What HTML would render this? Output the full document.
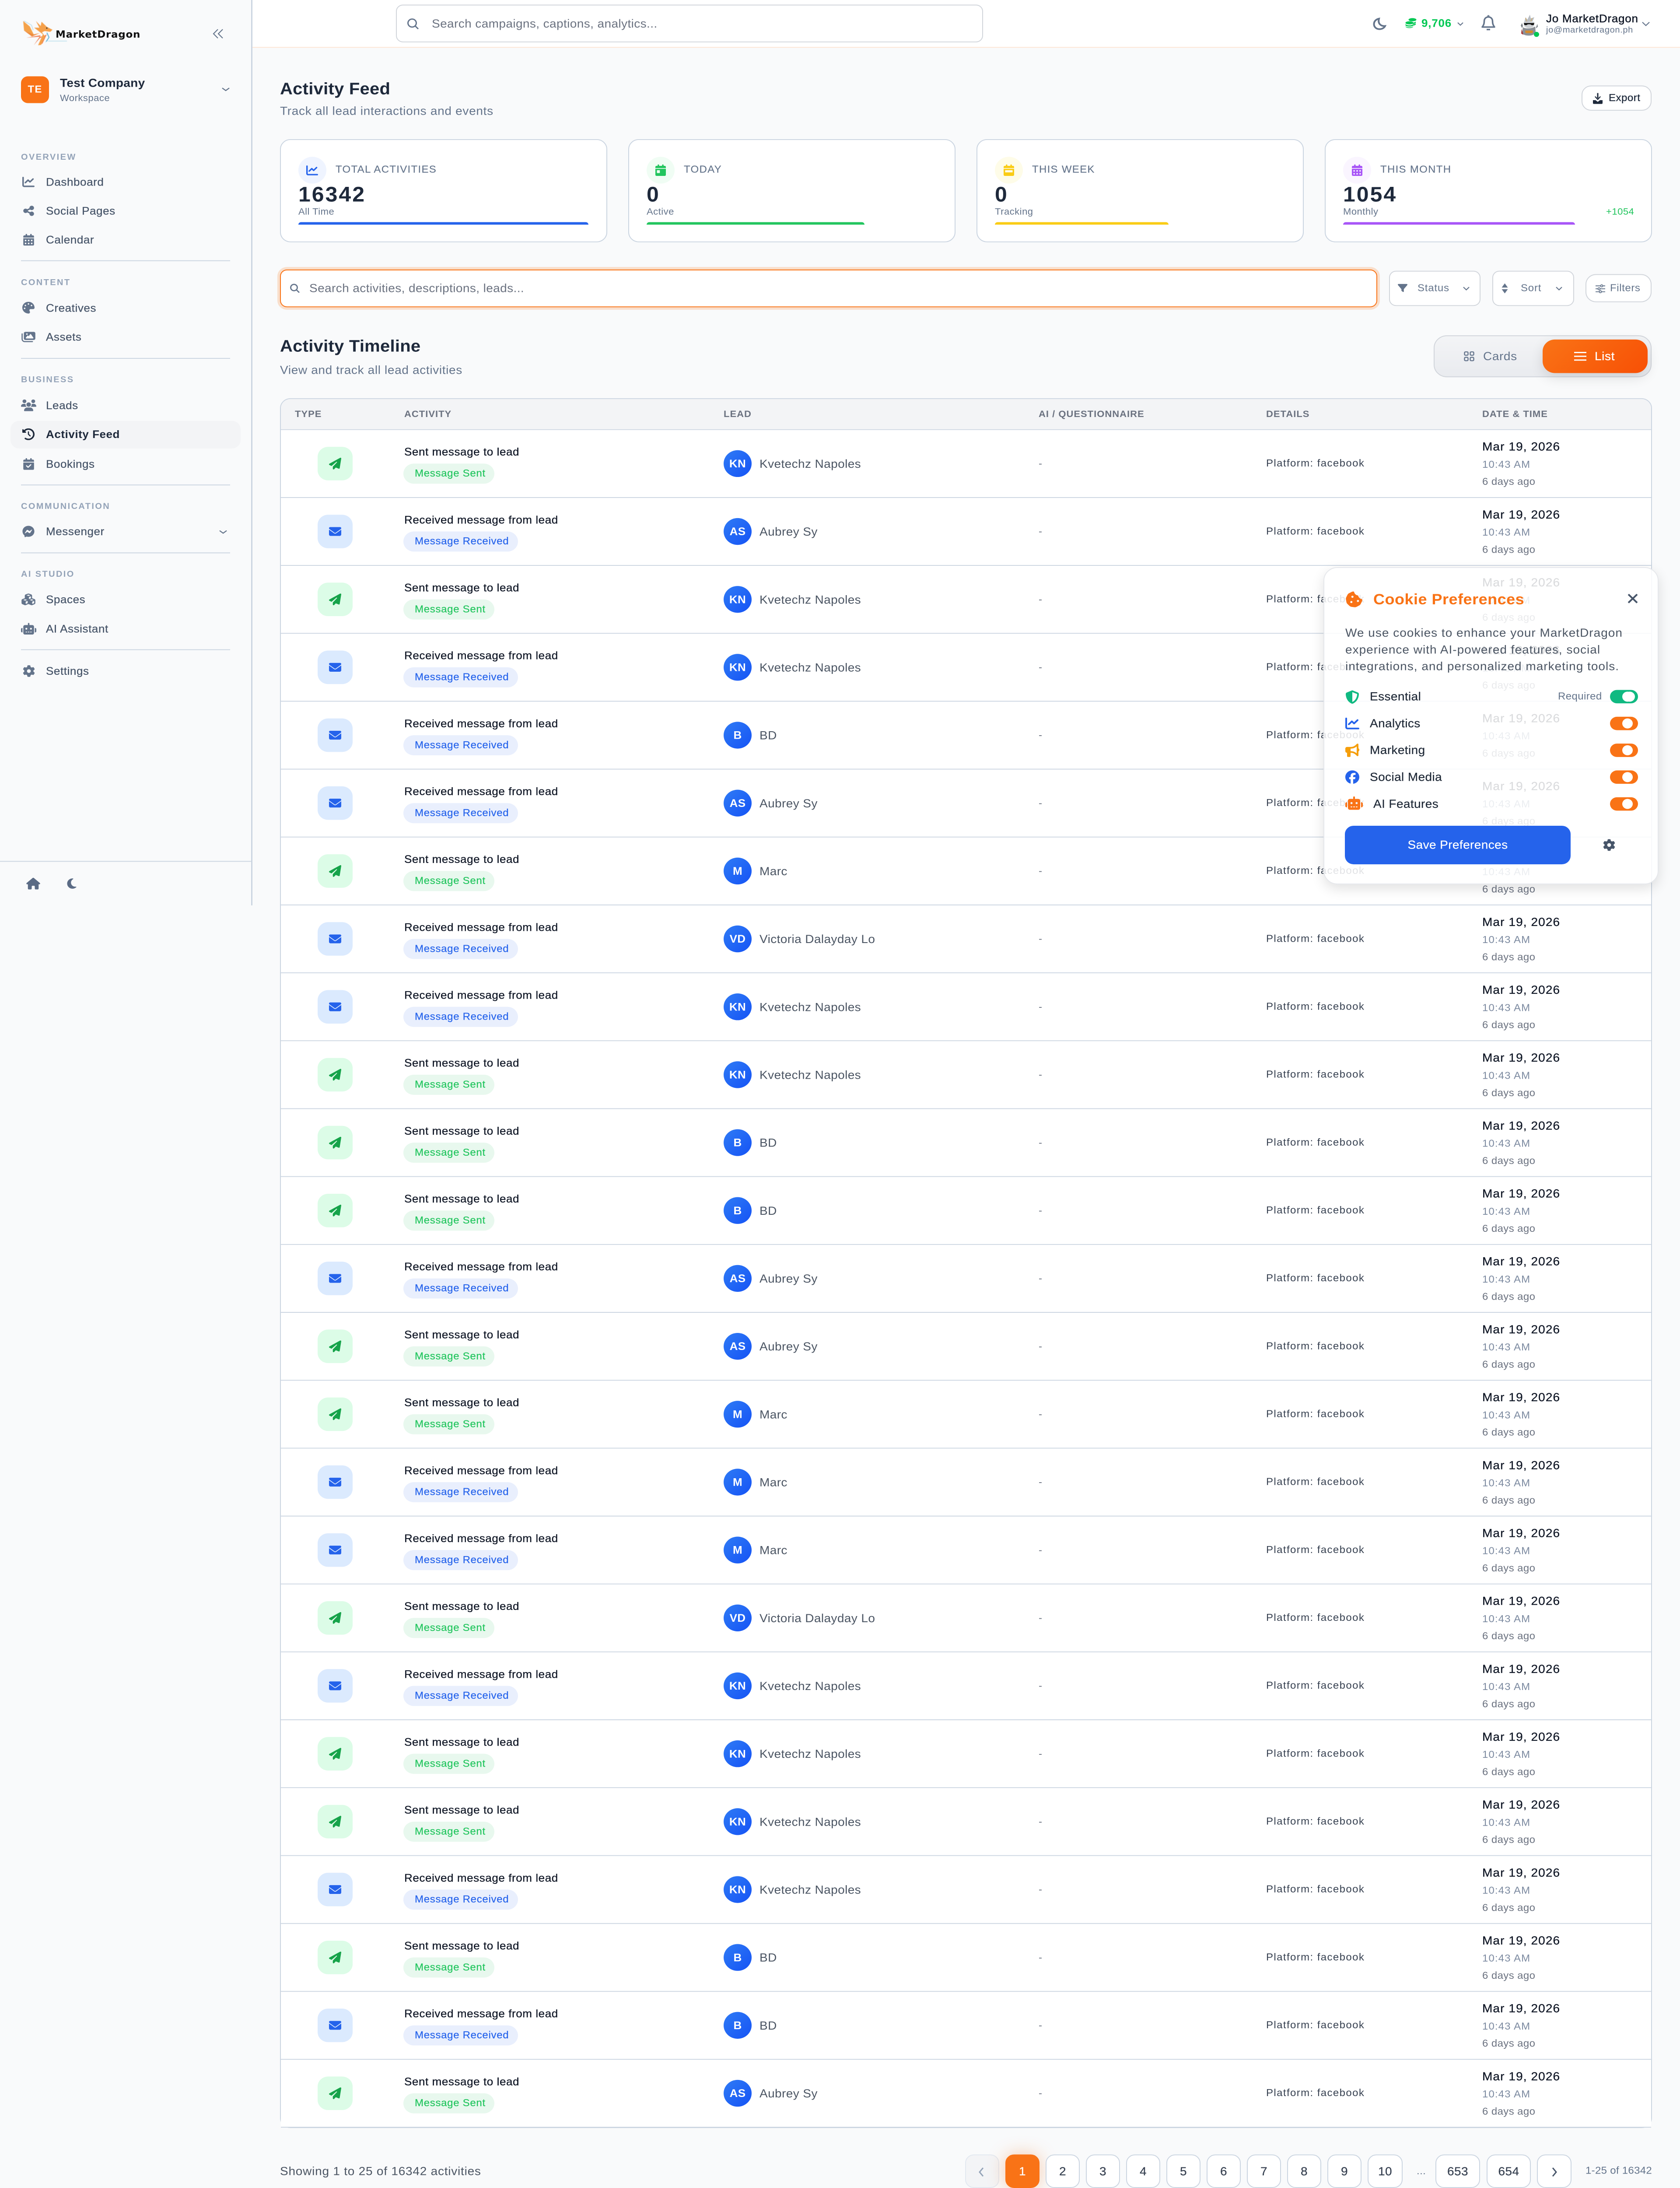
<!DOCTYPE html>
<html lang="en"><head><meta charset="utf-8"><title>Activity Feed</title>
<style>
*{box-sizing:border-box;margin:0;padding:0}
html,body{width:3840px;height:5220px;background:#f9fafb}
#page{position:relative;width:3840px;height:5220px;overflow:hidden;background:#f9fafb}
#in{position:absolute;left:0;top:0;width:3840px;height:5220px;overflow:hidden;background:#f9fafb;font-family:"Liberation Sans",sans-serif;letter-spacing:.025em;color:#111827}
@media (min-height:4900px) and (max-height:5219px){html,body{height:100vh;overflow:hidden}#page{height:100vh}#in{transform-origin:0 0;transform:scale(1,.95785)}}
.x,.t,.x *{position:absolute}
.t{white-space:nowrap;line-height:40px;height:40px}
.m{-webkit-text-stroke:.35px currentColor}
svg{display:block;overflow:visible}
.sl{left:48px;font-size:20px;font-weight:700;letter-spacing:2.4px;color:#94a3b8;white-space:nowrap;line-height:40px;height:40px;position:absolute}
.nl{position:absolute;left:105px;font-size:26px;letter-spacing:.58px;color:#475569;white-space:nowrap;line-height:40px;height:40px;-webkit-text-stroke:.3px currentColor}
.dv{position:absolute;left:48px;width:478px;height:2px;background:#cbd5e1}
.si{position:absolute;fill:#64748b}
.card{position:absolute;top:332px;width:748px;height:246px;background:#fff;border:2px solid #cbd5e1;border-radius:24px}
.ci{position:absolute;left:40px;top:40px;width:64px;height:64px;border-radius:50%}
.cl{position:absolute;left:125px;top:51px;font-size:24px;letter-spacing:1.3px;color:#64748b;line-height:40px;white-space:nowrap;-webkit-text-stroke:.2px currentColor}
.cn{position:absolute;left:40px;top:100px;font-size:50px;font-weight:700;letter-spacing:3px;color:#1e293b;line-height:60px}
.cs{position:absolute;left:40px;top:151px;font-size:22px;letter-spacing:.5px;color:#64748b;line-height:40px;white-space:nowrap}
.cb{position:absolute;left:40px;top:196px;height:6px;border-radius:6px 6px 0 0}
.bt{position:absolute;background:#fff;border:2px solid #d1d5db}
.th{position:absolute;top:968px;font-size:22px;font-weight:700;letter-spacing:1px;color:#6b7280;line-height:40px;white-space:nowrap}
.r{position:absolute;left:642px;width:3132px;height:162px;background:#fff;border-bottom:2px solid #cbd5e1}
.r>*{position:absolute;white-space:nowrap;font-style:normal}
.ic{left:84px;top:40px;width:80px;height:80px;border-radius:24px}
.ic svg{position:absolute;left:26px;top:26px;width:28px;height:28px}
.s{background:#dcfce7}.s svg{fill:#16a34a}.v{background:#dbeafe}.v svg{fill:#2563eb}
.a{left:282px;top:32px;font-size:26px;line-height:40px;font-weight:400;letter-spacing:.58px;color:#111827;-webkit-text-stroke:.35px currentColor}
.b{left:280px;top:80px;height:48px;border-radius:24px;font-size:24px;line-height:48px;padding-left:26px;letter-spacing:.7px;-webkit-text-stroke:.25px currentColor}
.g{width:208px;background:#e8f8ee;color:#22c55e}.u{width:262px;background:#e9effd;color:#2563eb}
.av{left:1012px;top:48px;width:64px;height:64px;border-radius:50%;background:linear-gradient(135deg,#2f7bf5,#1553f5);color:#fff;font-size:26px;font-weight:700;text-align:center;line-height:64px;letter-spacing:.3px}
.n{left:1094px;top:61px;font-size:28px;line-height:40px;color:#4b5563}
.d{left:1732px;top:61px;font-size:24px;line-height:40px;color:#6b7280}
.p{left:2252px;top:60px;font-size:24px;line-height:40px;letter-spacing:1.4px;color:#374151}
.dt{left:2746px;top:20px;font-size:28px;line-height:40px;letter-spacing:1.1px;color:#111827;-webkit-text-stroke:.35px currentColor}
.tm{left:2746px;top:63px;font-size:24px;line-height:40px;letter-spacing:1.1px;color:#7c8aa0}
.ag{left:2746px;top:104px;font-size:24px;line-height:40px;letter-spacing:.4px;color:#6b7280}
.pg{position:absolute;top:5140px;height:80px;width:78px;background:#fff;border:2px solid #cbd5e1;border-radius:20px;text-align:center;font-size:28px;line-height:78px;color:#374151;-webkit-text-stroke:.3px currentColor}
.tg{position:absolute;left:653px;width:64px;height:32px;border-radius:16px;background:#f97316}
.tg:after{content:"";position:absolute;left:28px;top:4px;width:24px;height:24px;border-radius:50%;background:#fff}
.cr{position:absolute;font-size:28px;color:#1f2937;white-space:nowrap;line-height:40px;-webkit-text-stroke:.25px currentColor}
</style></head><body><div id="page"><div id="in">
<svg width="0" height="0" style="position:absolute"><defs>
<symbol id="chart" viewBox="0 0 512 512"><path d="M64 64c0-17.7-14.3-32-32-32S0 46.3 0 64V400c0 44.2 35.8 80 80 80H480c17.7 0 32-14.3 32-32s-14.3-32-32-32H80c-8.8 0-16-7.2-16-16V64zm406.6 86.6c12.5-12.5 12.5-32.8 0-45.3s-32.8-12.5-45.3 0L320 210.7l-57.4-57.4c-12.5-12.5-32.8-12.5-45.3 0l-112 112c-12.5 12.5-12.5 32.8 0 45.3s32.8 12.5 45.3 0L240 221.3l57.4 57.4c12.5 12.5 32.8 12.5 45.3 0l128-128z"/></symbol>
<symbol id="share" viewBox="0 0 448 512"><path d="M352 224c53 0 96-43 96-96s-43-96-96-96s-96 43-96 96c0 4 .2 8 .7 11.9l-94.1 47C145.4 170.2 121.9 160 96 160c-53 0-96 43-96 96s43 96 96 96c25.9 0 49.4-10.2 66.6-26.9l94.1 47c-.5 3.9-.7 7.8-.7 11.9c0 53 43 96 96 96s96-43 96-96s-43-96-96-96c-25.9 0-49.4 10.2-66.6 26.9l-94.1-47c.5-3.9 .7-7.8 .7-11.9s-.2-8-.7-11.9l94.1-47C302.6 213.8 326.1 224 352 224z"/></symbol>
<symbol id="cal" viewBox="0 0 448 512"><path d="M128 0c17.7 0 32 14.3 32 32V64H288V32c0-17.7 14.3-32 32-32s32 14.3 32 32V64h48c26.5 0 48 21.5 48 48v48H0V112C0 85.5 21.5 64 48 64H96V32c0-17.7 14.3-32 32-32zM0 192H448V464c0 26.5-21.5 48-48 48H48c-26.5 0-48-21.5-48-48V192zm64 80v32c0 8.8 7.2 16 16 16h32c8.8 0 16-7.2 16-16V272c0-8.8-7.2-16-16-16H80c-8.8 0-16 7.2-16 16zm128 0v32c0 8.8 7.2 16 16 16h32c8.8 0 16-7.2 16-16V272c0-8.8-7.2-16-16-16H208c-8.8 0-16 7.2-16 16zm144-16c-8.8 0-16 7.2-16 16v32c0 8.8 7.2 16 16 16h32c8.8 0 16-7.2 16-16V272c0-8.8-7.2-16-16-16H336zM64 400v32c0 8.8 7.2 16 16 16h32c8.8 0 16-7.2 16-16V400c0-8.8-7.2-16-16-16H80c-8.8 0-16 7.2-16 16zm144-16c-8.8 0-16 7.2-16 16v32c0 8.8 7.2 16 16 16h32c8.8 0 16-7.2 16-16V400c0-8.8-7.2-16-16-16H208zm112 16v32c0 8.8 7.2 16 16 16h32c8.8 0 16-7.2 16-16V400c0-8.8-7.2-16-16-16H336c-8.8 0-16 7.2-16 16z"/></symbol>
<symbol id="calday" viewBox="0 0 448 512"><path d="M128 0c17.7 0 32 14.3 32 32V64H288V32c0-17.7 14.3-32 32-32s32 14.3 32 32V64h48c26.5 0 48 21.5 48 48v48H0V112C0 85.5 21.5 64 48 64H96V32c0-17.7 14.3-32 32-32zM0 192H448V464c0 26.5-21.5 48-48 48H48c-26.5 0-48-21.5-48-48V192zm80 64c-8.8 0-16 7.2-16 16v96c0 8.8 7.2 16 16 16h96c8.8 0 16-7.2 16-16V272c0-8.8-7.2-16-16-16H80z"/></symbol>
<symbol id="calweek" viewBox="0 0 448 512"><path d="M128 0c17.7 0 32 14.3 32 32V64H288V32c0-17.7 14.3-32 32-32s32 14.3 32 32V64h48c26.5 0 48 21.5 48 48v48H0V112C0 85.5 21.5 64 48 64H96V32c0-17.7 14.3-32 32-32zM0 192H448V464c0 26.5-21.5 48-48 48H48c-26.5 0-48-21.5-48-48V192zm80 64c-8.8 0-16 7.2-16 16v64c0 8.8 7.2 16 16 16H368c8.8 0 16-7.2 16-16V272c0-8.8-7.2-16-16-16H80z"/></symbol>
<symbol id="palette" viewBox="0 0 512 512"><path d="M512 256c0 .9 0 1.8 0 2.7c-.4 36.5-33.6 61.3-70.1 61.3H344c-26.5 0-48 21.5-48 48c0 3.4 .4 6.7 1 9.9c2.1 10.2 6.5 20 10.8 29.9c6.1 13.8 12.1 27.5 12.1 42c0 31.8-21.6 60.7-53.4 62c-3.5 .1-7 .2-10.6 .2C114.6 512 0 397.4 0 256S114.6 0 256 0S512 114.6 512 256zM128 288a32 32 0 1 0 -64 0 32 32 0 1 0 64 0zm0-96a32 32 0 1 0 0-64 32 32 0 1 0 0 64zM288 96a32 32 0 1 0 -64 0 32 32 0 1 0 64 0zm96 96a32 32 0 1 0 0-64 32 32 0 1 0 0 64z"/></symbol>
<symbol id="images" viewBox="0 0 576 512"><path d="M160 32c-35.3 0-64 28.7-64 64V320c0 35.3 28.7 64 64 64H512c35.3 0 64-28.7 64-64V96c0-35.3-28.7-64-64-64H160zM396 138.7l96 144c4.9 7.4 5.4 16.8 1.2 24.6S480.9 320 472 320H328 280 200c-9.2 0-17.6-5.3-21.6-13.6s-2.9-18.2 2.9-25.4l64-80c4.6-5.7 11.4-9 18.7-9s14.2 3.3 18.7 9l17.3 21.6 56-84C360.5 132 368 128 376 128s15.5 4 20 10.7zM192 128a32 32 0 1 1 64 0 32 32 0 1 1 -64 0zM48 120c0-13.3-10.7-24-24-24S0 106.7 0 120V344c0 75.1 60.9 136 136 136H456c13.3 0 24-10.7 24-24s-10.7-24-24-24H136c-48.6 0-88-39.4-88-88V120z"/></symbol>
<symbol id="users" viewBox="0 0 640 512"><path d="M144 0a80 80 0 1 1 0 160A80 80 0 1 1 144 0zM512 0a80 80 0 1 1 0 160A80 80 0 1 1 512 0zM0 298.7C0 239.8 47.8 192 106.7 192h42.7c15.9 0 31 3.5 44.6 9.7c-1.3 7.2-1.9 14.7-1.9 22.3c0 38.2 16.8 72.5 43.3 96c-.2 0-.4 0-.7 0H21.3C9.6 320 0 310.4 0 298.7zM405.3 320c-.2 0-.4 0-.7 0c26.6-23.5 43.3-57.8 43.3-96c0-7.6-.7-15-1.9-22.3c13.6-6.3 28.7-9.7 44.6-9.7h42.7C592.2 192 640 239.8 640 298.7c0 11.8-9.6 21.3-21.3 21.3H405.3zM224 224a96 96 0 1 1 192 0 96 96 0 1 1 -192 0zM128 485.3C128 411.7 187.7 352 261.3 352H378.7C452.3 352 512 411.7 512 485.3c0 14.7-11.9 26.7-26.7 26.7H154.7c-14.7 0-26.7-11.9-26.7-26.7z"/></symbol>
<symbol id="hist" viewBox="0 0 512 512"><path d="M75 75L41 41C25.9 25.9 0 36.6 0 57.9V168c0 13.3 10.7 24 24 24H134.1c21.4 0 32.1-25.9 17-41l-30.8-30.8C155 85.5 203 64 256 64c106 0 192 86 192 192s-86 192-192 192c-40.8 0-78.6-12.7-109.7-34.4c-14.5-10.1-34.4-6.6-44.6 7.9s-6.6 34.4 7.9 44.6C151.2 495 201.7 512 256 512c141.4 0 256-114.6 256-256S397.4 0 256 0C185.3 0 121.3 28.7 75 75zm181 53c-13.3 0-24 10.7-24 24V256c0 6.4 2.5 12.5 7 17l72 72c9.4 9.4 24.6 9.4 33.9 0s9.4-24.6 0-33.9l-65-65V152c0-13.3-10.7-24-24-24z"/></symbol>
<symbol id="calcheck" viewBox="0 0 448 512"><path d="M128 0c17.7 0 32 14.3 32 32V64H288V32c0-17.7 14.3-32 32-32s32 14.3 32 32V64h48c26.5 0 48 21.5 48 48v48H0V112C0 85.5 21.5 64 48 64H96V32c0-17.7 14.3-32 32-32zM0 192H448V464c0 26.5-21.5 48-48 48H48c-26.5 0-48-21.5-48-48V192zM329 305c9.4-9.4 9.4-24.6 0-33.9s-24.6-9.4-33.9 0l-95 95-47-47c-9.4-9.4-24.6-9.4-33.9 0s-9.4 24.6 0 33.9l64 64c9.4 9.4 24.6 9.4 33.9 0L329 305z"/></symbol>
<symbol id="msgr" viewBox="0 0 512 512"><path d="M256.55 8C116.52 8 8 110.34 8 248.57c0 72.3 29.71 134.78 78.07 177.94 8.35 7.51 6.63 11.86 8.05 58.23A19.92 19.92 0 0 0 122 502.31c52.91-23.3 53.59-25.14 62.56-22.7C337.85 521.8 504 423.7 504 248.57 504 110.34 396.59 8 256.55 8zm149.24 185.13l-73 115.57a37.37 37.37 0 0 1-53.91 9.93l-58.08-43.47a15 15 0 0 0-18 0l-78.37 59.44c-10.46 7.93-24.16-4.6-17.11-15.67l73-115.57a37.36 37.36 0 0 1 53.91-9.93l58.06 43.46a15 15 0 0 0 18 0l78.41-59.38c10.44-7.98 24.14 4.54 17.09 15.62z"/></symbol>
<symbol id="cubes" viewBox="0 0 576 512"><path d="M290.8 48.6l78.4 29.7L288 109.5 206.8 78.3l78.4-29.7c1.8-.7 3.8-.7 5.7 0zM136 92.5V204.7c-1.3 .4-2.6 .8-3.9 1.3l-96 36.4C14.4 250.6 0 271.5 0 294.7V413.9c0 22.2 13.1 42.3 33.5 51.3l96 42.2c14.4 6.3 30.7 6.3 45.1 0L288 457.5l113.5 49.9c14.4 6.3 30.7 6.3 45.1 0l96-42.2c20.3-8.9 33.5-29.1 33.5-51.3V294.7c0-23.3-14.4-44.1-36.1-52.4l-96-36.4c-1.3-.5-2.6-.9-3.9-1.3V92.5c0-23.3-14.4-44.1-36.1-52.4l-96-36.4c-12.8-4.8-26.9-4.8-39.7 0l-96 36.4C150.4 48.4 136 69.3 136 92.5zM392 210.6l-82.4 31.2V152.6L392 121v89.6zM154.8 250.9l78.4 29.7L152 311.7 70.8 280.6l78.4-29.7c1.8-.7 3.8-.7 5.7 0zm18.8 204.4V354.8L256 323.2v95.9l-82.4 36.2zM421.2 250.9c1.8-.7 3.8-.7 5.7 0l78.4 29.7L424 311.7l-81.2-31.1 78.4-29.7zM523.2 421.2l-77.6 34.1V354.8L528 323.2v90.7c0 3.2-1.9 6-4.8 7.3z"/></symbol>
<symbol id="robot" viewBox="0 0 640 512"><path d="M320 0c17.7 0 32 14.3 32 32V96H472c39.8 0 72 32.2 72 72V440c0 39.8-32.2 72-72 72H168c-39.8 0-72-32.2-72-72V168c0-39.8 32.2-72 72-72H288V32c0-17.7 14.3-32 32-32zM208 384c-8.8 0-16 7.2-16 16s7.2 16 16 16h32c8.8 0 16-7.2 16-16s-7.2-16-16-16H208zm96 0c-8.8 0-16 7.2-16 16s7.2 16 16 16h32c8.8 0 16-7.2 16-16s-7.2-16-16-16H304zm96 0c-8.8 0-16 7.2-16 16s7.2 16 16 16h32c8.8 0 16-7.2 16-16s-7.2-16-16-16H400zM264 256a40 40 0 1 0 -80 0 40 40 0 1 0 80 0zm152 40a40 40 0 1 0 0-80 40 40 0 1 0 0 80zM48 224H64V416H48c-26.5 0-48-21.5-48-48V272c0-26.5 21.5-48 48-48zm544 0c26.5 0 48 21.5 48 48v96c0 26.5-21.5 48-48 48H576V224h16z"/></symbol>
<symbol id="gear" viewBox="0 0 512 512"><path d="M495.9 166.6c3.2 8.7 .5 18.4-6.4 24.6l-43.3 39.4c1.1 8.3 1.7 16.8 1.7 25.4s-.6 17.1-1.7 25.4l43.3 39.4c6.9 6.2 9.6 15.9 6.4 24.6c-4.4 11.9-9.7 23.3-15.8 34.3l-4.7 8.1c-6.6 11-14 21.4-22.1 31.2c-5.9 7.2-15.7 9.6-24.5 6.8l-55.7-17.7c-13.4 10.3-28.2 18.9-44 25.4l-12.5 57.1c-2 9.1-9 16.3-18.2 17.8c-13.8 2.3-28 3.5-42.5 3.5s-28.7-1.2-42.5-3.5c-9.2-1.5-16.2-8.7-18.2-17.8l-12.5-57.1c-15.8-6.5-30.6-15.1-44-25.4L83.1 425.9c-8.8 2.8-18.6 .3-24.5-6.8c-8.1-9.8-15.5-20.2-22.1-31.2l-4.7-8.1c-6.1-11-11.4-22.4-15.8-34.3c-3.2-8.7-.5-18.4 6.4-24.6l43.3-39.4C64.6 273.1 64 264.6 64 256s.6-17.1 1.7-25.4L22.4 191.2c-6.9-6.2-9.6-15.9-6.4-24.6c4.4-11.9 9.7-23.3 15.8-34.3l4.7-8.1c6.6-11 14-21.4 22.1-31.2c5.9-7.2 15.7-9.6 24.5-6.8l55.7 17.7c13.4-10.3 28.2-18.9 44-25.4l12.5-57.1c2-9.1 9-16.3 18.2-17.8C227.3 1.2 241.5 0 256 0s28.7 1.2 42.5 3.5c9.2 1.5 16.2 8.7 18.2 17.8l12.5 57.1c15.8 6.5 30.6 15.1 44 25.4l55.7-17.7c8.8-2.8 18.6-.3 24.5 6.8c8.1 9.8 15.5 20.2 22.1 31.2l4.7 8.1c6.1 11 11.4 22.4 15.8 34.3zM256 336a80 80 0 1 0 0-160 80 80 0 1 0 0 160z"/></symbol>
<symbol id="home" viewBox="0 0 576 512"><path d="M575.8 255.5c0 18-15 32.1-32 32.1h-32l.7 160.2c0 2.7-.2 5.4-.5 8.1V472c0 22.1-17.9 40-40 40H456c-1.1 0-2.2 0-3.3-.1c-1.4 .1-2.8 .1-4.2 .1H416 392c-22.1 0-40-17.9-40-40V448 384c0-17.7-14.3-32-32-32H256c-17.7 0-32 14.3-32 32v64 24c0 22.1-17.9 40-40 40H160 128.1c-1.5 0-3-.1-4.5-.2c-1.2 .1-2.4 .2-3.6 .2H104c-22.1 0-40-17.9-40-40V360c0-.9 0-1.9 .1-2.8V287.6H32c-18 0-32-14-32-32.1c0-9 3-17 10-24L266.4 8c7-7 15-8 22-8s15 2 21 7L564.8 231.5c8 7 12 15 11 24z"/></symbol>
<symbol id="moon" viewBox="0 0 384 512"><path d="M223.5 32C100 32 0 132.3 0 256S100 480 223.5 480c60.6 0 115.5-24.2 155.8-63.4c5-4.9 6.3-12.5 3.1-18.7s-10.1-9.7-17-8.5c-9.8 1.7-19.8 2.6-30.1 2.6c-96.9 0-175.5-78.8-175.5-176c0-65.8 36-123.1 89.3-153.3c6.1-3.5 9.2-10.5 7.7-17.3s-7.3-11.9-14.3-12.5c-6.3-.5-12.6-.8-19-.8z"/></symbol>
<symbol id="plane" viewBox="0 0 512 512"><path d="M498.1 5.6c10.1 7 15.4 19.1 13.5 31.2l-64 416c-1.5 9.7-7.4 18.2-16 23s-18.9 5.4-28 1.6L284 427.7l-68.5 74.1c-8.9 9.7-22.9 12.9-35.2 8.1S160 493.2 160 480V396.4c0-4 1.5-7.8 4.2-10.7L331.8 202.8c5.8-6.3 5.6-16-.4-22s-15.7-6.4-22-.7L106 360.8 17.7 316.6C7.1 311.3 .3 300.7 0 288.9s5.9-22.8 16.1-28.7l448-256c10.7-6.1 23.9-5.5 34 1.4z"/></symbol>
<symbol id="env" viewBox="0 0 512 512"><path d="M48 64C21.5 64 0 85.5 0 112c0 15.1 7.1 29.3 19.2 38.4L236.8 313.6c11.4 8.5 27 8.5 38.4 0L492.8 150.4c12.1-9.1 19.2-23.3 19.2-38.4c0-26.5-21.5-48-48-48H48zM0 176V384c0 35.3 28.7 64 64 64H448c35.3 0 64-28.7 64-64V176L294.4 339.2c-22.8 17.1-54 17.1-76.8 0L0 176z"/></symbol>
<symbol id="filter" viewBox="0 0 512 512"><path d="M3.9 54.9C10.5 40.9 24.5 32 40 32H472c15.5 0 29.5 8.9 36.1 22.9s4.6 30.5-5.2 42.5L320 320.9V448c0 12.1-6.8 23.2-17.7 28.6s-23.8 4.3-33.5-3l-64-48c-8.1-6-12.8-15.5-12.8-25.6V320.9L9 97.3C-.7 85.4-2.8 68.8 3.9 54.9z"/></symbol>
<symbol id="shield" viewBox="0 0 512 512"><path d="M256 0c4.6 0 9.2 1 13.4 2.9L457.7 82.8c22 9.3 38.4 31 38.3 57.2c-.5 99.2-41.3 280.7-213.6 363.2c-16.7 8-36.1 8-52.8 0C57.3 420.7 16.5 239.2 16 140c-.1-26.2 16.3-47.9 38.3-57.2L242.7 2.9C246.8 1 251.4 0 256 0zm0 66.8V444.8C394 378 431.1 230.1 432 141.4L256 66.8z"/></symbol>
<symbol id="horn" viewBox="0 0 512 512"><path d="M480 32c0-12.9-7.8-24.6-19.8-29.6s-25.7-2.2-34.9 6.9L381.7 53c-48 48-113.1 75-181 75H192 160 64c-35.3 0-64 28.7-64 64v96c0 35.3 28.7 64 64 64l0 128c0 17.7 14.3 32 32 32h64c17.7 0 32-14.3 32-32V352h8.7c67.9 0 133 27 181 75l43.6 43.6c9.2 9.2 22.9 11.9 34.9 6.9s19.8-16.6 19.8-29.6V300.4c18.6-8.8 32-32.5 32-60.4s-13.4-51.6-32-60.4V32zm-64 76.7V240 371.3C357.2 317.8 280.5 288 200.7 288H192V192h8.7c79.8 0 156.5-29.8 215.3-83.3z"/></symbol>
<symbol id="fb" viewBox="0 0 512 512"><path d="M512 256C512 114.6 397.4 0 256 0S0 114.6 0 256C0 376 82.7 476.8 194.2 504.5V334.2H141.4V256h52.8V222.3c0-87.1 39.4-127.5 125-127.5c16.2 0 44.2 3.2 55.7 6.4V172c-6-.6-16.5-1-29.6-1c-42 0-58.2 15.9-58.2 57.2V256h83.6l-14.4 78.2H287V510.1C413.8 494.8 512 386.9 512 256h0z"/></symbol>
<symbol id="cookie" viewBox="0 0 512 512"><path d="M257.5 27.6c-.8-5.4-4.9-9.8-10.3-10.6c-22.1-3.1-44.6 .9-64.4 11.4l-74 39.5C89.1 78.4 73.2 94.9 63.4 115L26.7 190.6c-9.8 20.1-13 42.9-9.1 64.9l14.5 82.8c3.9 22.1 14.6 42.3 30.7 57.9l60.3 58.4c16.1 15.6 36.6 25.6 58.7 28.7l83 11.7c22.1 3.1 44.6-.9 64.4-11.4l74-39.5c19.7-10.5 35.6-27 45.4-47.2l36.7-75.5c9.8-20.1 13-42.9 9.1-64.9c-.9-5.3-5.3-9.3-10.6-10.1c-51.5-8.2-92.8-47.1-104.5-97.4c-1.8-7.6-8-13.4-15.7-14.6c-54.6-8.7-97.7-52-106.2-106.8zM208 144a32 32 0 1 1 0 64 32 32 0 1 1 0-64zM144 336a32 32 0 1 1 64 0 32 32 0 1 1 -64 0zm224-64a32 32 0 1 1 0 64 32 32 0 1 1 0-64z"/></symbol>
</defs></svg>

<!-- Sidebar -->
<div style="position:absolute;left:0;top:0;width:577px;height:2160px;background:#f9fafb;border-right:3px solid #cbd5e1">
<svg style="position:absolute;left:30px;top:40px;filter:blur(.5px)" width="105" height="70" viewBox="0 0 105 70"><path d="M25 10l17 10 4 12M78 38l4 11-8 12M80 58h43" fill="none" stroke="#b7dcec" stroke-width="1.5"/><path d="M23 10l2 23 22 9-9-19z" fill="#f4a24a"/><path d="M25 33l22 9 14-3-18 8z" fill="#ee8a3c"/><path d="M30 50l33-6-16 24 14-17 16-9-10 22-9 3 8-20z" fill="#ef7a4a"/><path d="M52 10l11 12 2-10 12 12 13 7-5 5-13-2-6 3 7 10-9 20-7 1 11-26-20-16 12 0z" fill="#f5a04a"/><path d="M77 38l5 11-6 10" fill="none" stroke="#5db0d6" stroke-width="2"/><circle cx="77" cy="27" r="1.5" fill="#222"/></svg>
<div class="t" style="left:127px;top:63px;font-family:'DejaVu Sans',sans-serif;font-weight:700;font-size:23px;letter-spacing:.7px;color:#111;filter:blur(.3px)">MarketDragon</div>
<svg style="position:absolute;left:486px;top:68px" width="24" height="25" viewBox="0 0 24 25" fill="none" stroke="#64748b" stroke-width="2.2"><path d="M12 2L2 12.5 12 23M23 2L13 12.5 23 23"/></svg>
<div class="x" style="left:48px;top:182px;width:64px;height:64px;border-radius:16px;background:#f97316;color:#fff;font-size:24px;font-weight:700;text-align:center;line-height:64px;letter-spacing:1.2px">TE</div>
<div class="t" style="left:137px;top:178px;font-size:28px;font-weight:700;letter-spacing:.3px;color:#1e293b">Test Company</div>
<div class="t" style="left:137px;top:214px;font-size:22px;letter-spacing:.5px;color:#64748b">Workspace</div>
<svg style="position:absolute;left:507px;top:209px" width="18" height="9" viewBox="0 0 18 9" fill="none" stroke="#64748b" stroke-width="2.4"><path d="M1 1l8 6 8-6"/></svg>

<div class="sl" style="top:355px">OVERVIEW</div>
<svg class="si" style="left:51px;top:420px" width="28" height="28"><use href="#chart"/></svg><div class="nl" style="top:414px">Dashboard</div>
<svg class="si" style="left:53px;top:489px" width="25" height="28"><use href="#share"/></svg><div class="nl" style="top:483px">Social Pages</div>
<svg class="si" style="left:53px;top:558px" width="25" height="28"><use href="#cal"/></svg><div class="nl" style="top:552px">Calendar</div>
<div class="dv" style="top:621px"></div>
<div class="sl" style="top:654px">CONTENT</div>
<svg class="si" style="left:51px;top:720px" width="28" height="28"><use href="#palette"/></svg><div class="nl" style="top:715px">Creatives</div>
<svg class="si" style="left:49px;top:790px" width="32" height="28"><use href="#images"/></svg><div class="nl" style="top:784px">Assets</div>
<div class="dv" style="top:854px"></div>
<div class="sl" style="top:886px">BUSINESS</div>
<svg class="si" style="left:48px;top:953px" width="35" height="28"><use href="#users"/></svg><div class="nl" style="top:947px">Leads</div>
<div style="position:absolute;left:24px;top:1004px;width:526px;height:66px;background:#f3f4f6;border-radius:20px"></div>
<svg class="si" style="left:51px;top:1022px;fill:#1e293b" width="28" height="28"><use href="#hist"/></svg><div class="nl" style="top:1016px;font-weight:700;color:#1e293b;letter-spacing:.55px;-webkit-text-stroke:0">Activity Feed</div>
<svg class="si" style="left:53px;top:1093px" width="25" height="28"><use href="#calcheck"/></svg><div class="nl" style="top:1087px">Bookings</div>
<div class="dv" style="top:1156px"></div>
<div class="sl" style="top:1188px">COMMUNICATION</div>
<svg class="si" style="left:51px;top:1254px" width="28" height="28"><use href="#msgr"/></svg><div class="nl" style="top:1248px">Messenger</div>
<svg style="position:absolute;left:501px;top:1265px" width="18" height="9" viewBox="0 0 18 9" fill="none" stroke="#64748b" stroke-width="2.4"><path d="M1 1l8 6 8-6"/></svg>
<div class="dv" style="top:1318px"></div>
<div class="sl" style="top:1350px">AI STUDIO</div>
<svg class="si" style="left:49px;top:1416px" width="32" height="28"><use href="#cubes"/></svg><div class="nl" style="top:1410px">Spaces</div>
<svg class="si" style="left:48px;top:1486px" width="35" height="28"><use href="#robot"/></svg><div class="nl" style="top:1480px">AI Assistant</div>
<div class="dv" style="top:1549px"></div>
<svg class="si" style="left:52px;top:1587px" width="28" height="28"><use href="#gear"/></svg><div class="nl" style="top:1581px">Settings</div>
<div style="position:absolute;left:0;top:2054px;width:574px;height:2px;background:#cbd5e1"></div>
<svg class="si" style="left:60px;top:2094px;fill:#5b6b85" width="32" height="28"><use href="#home"/></svg>
<svg class="si" style="left:153px;top:2094px;fill:#5b6b85" width="22" height="28"><use href="#moon"/></svg>
</div>

<!-- Header -->
<div style="position:absolute;left:577px;top:0;width:3263px;height:114px;background:#fff;border-bottom:2px solid #fde6d5"></div>
<div class="bt" style="left:905px;top:11px;width:1342px;height:90px;border-radius:16px"></div>
<svg style="position:absolute;left:930px;top:43px" width="28" height="28" viewBox="0 0 28 28" fill="none" stroke="#64748b" stroke-width="3"><circle cx="12" cy="12" r="9.5"/><path d="M19 19l7 7"/></svg>
<div class="t" style="left:987px;top:37px;font-size:28px;color:#6b7280">Search campaigns, captions, analytics...</div>
<svg style="position:absolute;left:3138px;top:42px" width="32" height="30" viewBox="0 0 32 30" fill="none" stroke="#64748b" stroke-width="4"><path d="M14 2.5C7 4 2.5 9 2.5 15.5 2.500 22.500 8 27.500 15 27.500 21 27.500 26 24.500 28 20 19 21 10.500 15 14 2.500z"/></svg>
<svg style="position:absolute;left:3212px;top:43px" width="26" height="24" viewBox="0 0 26 24" fill="#00c853"><ellipse cx="16.500" cy="4" rx="9" ry="3.800"/><path d="M24 8c-1 2-4 3-7.500 3-1 0-2 0-3-.3 2 1 3.500 2 3.500 3.500 2 0 5-.7 7-2.200zM24 13l-7 3v2c3 0 6-1 7-2.500z"/><ellipse cx="9.500" cy="11.500" rx="9" ry="3.800"/><path d="M.5 14.500c2 2 5.500 3 9 3s7-1 9-3v3c-1.500 2-5 2.800-9 2.800s-7.500-.8-9-2.800zM.5 20c2 1.500 5.500 2.200 9 2.200s7-.7 9-2.200c0 2-4 4-9 4s-9-2-9-4z"/></svg>
<div class="t" style="left:3249px;top:35px;font-size:26px;font-weight:700;letter-spacing:.8px;color:#00c853">9,706</div>
<svg style="position:absolute;left:3331px;top:53px" width="14" height="8" viewBox="0 0 14 8" fill="none" stroke="#64748b" stroke-width="2.200"><path d="M1 1l6 6 6-6"/></svg>
<svg style="position:absolute;left:3386px;top:36px" width="32" height="38" viewBox="0 0 32 38" fill="none" stroke="#64748b" stroke-width="3.500"><path d="M16 4.500c-6 0-9.500 4.500-9.500 10 0 7-2 10.500-4.500 14h28c-2.500-3.500-4.500-7-4.500-14 0-5.500-3.500-10-9.500-10z" stroke-linejoin="round"/><circle cx="16" cy="2.500" r="1" stroke-width="3"/><path d="M12 34.500h8" stroke-width="3.500"/></svg>
<svg style="position:absolute;left:3472px;top:35px" width="46" height="53" viewBox="0 0 46 53"><path d="M12 18L15 6l4 6 6-12 2 9 8-3-4 10z" fill="#b9bec4"/><path d="M15 8l3 8M30 8l-3 8" stroke="#e0a030" stroke-width="1"/><path d="M11 17h24v7c0 4-5 8-12 8s-12-4-12-8z" fill="#cfd2d6"/><path d="M11 20h24l-1 4c-3 2-6 1-8-1h-6c-2 2-5 3-8 1z" fill="#111"/><path d="M9 30c5 4 20 4 28-2l1 13c-3 7-8 9-16 9-7 0-12-2-15-6z" fill="#8c9096"/><path d="M14 38h18l-1 6H15z" fill="#d58a2a"/><path d="M4 26l3-6 2 7-2 5zM42 22l1 7-5 4z" fill="#7a8087"/><path d="M6 34l4 14-5-3z" fill="#a33"/></svg>
<div style="position:absolute;left:3506px;top:76px;width:12px;height:12px;border-radius:50%;background:#00c853"></div>
<div class="t" style="left:3534px;top:24px;font-size:26px;letter-spacing:.75px;color:#111827;-webkit-text-stroke:.5px currentColor">Jo MarketDragon</div>
<div class="t" style="left:3534px;top:52px;font-size:20px;letter-spacing:.66px;color:#64748b">jo@marketdragon.ph</div>
<svg style="position:absolute;left:3753px;top:52px" width="18" height="11" viewBox="0 0 18 11" fill="none" stroke="#64748b" stroke-width="2.200"><path d="M1 1l8 8 8-8"/></svg>

<!-- Title -->
<div class="t" style="left:640px;top:192px;font-size:40px;font-weight:700;letter-spacing:.25px;color:#1e293b">Activity Feed</div>
<div class="t" style="left:640px;top:245px;font-size:28px;letter-spacing:.7px;color:#64748b">Track all lead interactions and events</div>
<div class="bt" style="left:3615px;top:204px;width:160px;height:60px;border-radius:22px"></div>
<svg style="position:absolute;left:3640px;top:222px" width="24" height="26" viewBox="0 0 24 26" fill="#1e293b"><path d="M12 0v12" stroke="#1e293b" stroke-width="3"/><path d="M5 9l7 8 7-8-1.500-1.500L12 13 6.500 7.500z"/><path d="M1 17h6l5 4 5-4h6v7c0 1-1 2-2 2H3c-1 0-2-1-2-2z"/></svg>
<div class="t m" style="left:3677px;top:214px;font-size:24px;letter-spacing:.5px;color:#1e293b">Export</div>

<!-- Stat cards -->
<div class="card" style="left:640px"><div class="ci" style="background:#eff4ff"></div><svg style="position:absolute;left:58px;top:59px;fill:#2563eb" width="27" height="27"><use href="#chart"/></svg><div class="cl">TOTAL ACTIVITIES</div><div class="cn">16342</div><div class="cs">All Time</div><div class="cb" style="width:663px;background:#2563eb"></div></div>
<div class="card" style="left:1436px"><div class="ci" style="background:#f0fdf4"></div><svg style="position:absolute;left:60px;top:58px;fill:#22c55e" width="24" height="28"><use href="#calday"/></svg><div class="cl">TODAY</div><div class="cn">0</div><div class="cs">Active</div><div class="cb" style="width:498px;background:#22c55e"></div></div>
<div class="card" style="left:2232px"><div class="ci" style="background:#fefce8"></div><svg style="position:absolute;left:60px;top:58px;fill:#facc15" width="24" height="28"><use href="#calweek"/></svg><div class="cl">THIS WEEK</div><div class="cn">0</div><div class="cs">Tracking</div><div class="cb" style="width:397px;background:#facc15"></div></div>
<div class="card" style="left:3028px"><div class="ci" style="background:#faf5ff"></div><svg style="position:absolute;left:60px;top:58px;fill:#a855f7" width="24" height="28"><use href="#cal"/></svg><div class="cl">THIS MONTH</div><div class="cn">1054</div><div class="cs">Monthly</div><div class="cb" style="width:530px;background:#a855f7"></div><div class="cs" style="left:641px;color:#22c55e">+1054</div></div>

<!-- Filters -->
<div style="position:absolute;left:640px;top:643px;width:2508px;height:90px;background:#fff;border:2px solid #f97316;border-radius:16px;box-shadow:0 0 0 6px rgba(249,115,22,.2)"></div>
<svg style="position:absolute;left:663px;top:677px" width="22" height="22" viewBox="0 0 22 22" fill="none" stroke="#64748b" stroke-width="2.800"><circle cx="9" cy="9" r="7.500"/><path d="M15 15l6 6"/></svg>
<div class="t" style="left:707px;top:668px;font-size:28px;color:#6b7280">Search activities, descriptions, leads...</div>
<div class="bt" style="left:3175px;top:646px;width:209px;height:84px;border-radius:16px"></div>
<svg style="position:absolute;left:3195px;top:676px;fill:#64748b" width="22" height="22"><use href="#filter"/></svg>
<div class="t" style="left:3240px;top:668px;font-size:24px;letter-spacing:.8px;color:#64748b">Status</div>
<svg style="position:absolute;left:3344px;top:684px" width="15" height="9" viewBox="0 0 15 9" fill="none" stroke="#64748b" stroke-width="2.200"><path d="M1 1l6.500 6.500L14 1"/></svg>
<div class="bt" style="left:3411px;top:646px;width:187px;height:84px;border-radius:16px"></div>
<svg style="position:absolute;left:3432px;top:676px" width="15" height="24" viewBox="0 0 15 24" fill="#64748b"><path d="M7.500 0l7 10H.5zM7.500 24l-7-10h14z"/></svg>
<div class="t" style="left:3476px;top:668px;font-size:24px;letter-spacing:.8px;color:#64748b">Sort</div>
<svg style="position:absolute;left:3556px;top:684px" width="15" height="9" viewBox="0 0 15 9" fill="none" stroke="#64748b" stroke-width="2.200"><path d="M1 1l6.500 6.500L14 1"/></svg>
<div class="bt" style="left:3624px;top:654px;width:151px;height:67px;border-radius:24px"></div>
<svg style="position:absolute;left:3647px;top:679px" width="22" height="20" viewBox="0 0 22 20" fill="none" stroke="#64748b" stroke-width="2"><path d="M0 3h22M0 10h22M0 17h22"/><circle cx="14" cy="3" r="2.500" fill="#fff"/><circle cx="8" cy="10" r="2.500" fill="#fff"/><circle cx="11" cy="17" r="2.500" fill="#fff"/></svg>
<div class="t" style="left:3680px;top:668px;font-size:24px;letter-spacing:.6px;color:#64748b">Filters</div>

<!-- Timeline heading -->
<div class="t" style="left:640px;top:806px;font-size:40px;font-weight:700;letter-spacing:.25px;color:#1e293b">Activity Timeline</div>
<div class="t" style="left:640px;top:863px;font-size:28px;letter-spacing:.65px;color:#64748b">View and track all lead activities</div>
<div style="position:absolute;left:3277px;top:800px;width:498px;height:100px;border:2px solid #d1d5db;border-radius:30px;background:linear-gradient(180deg,#f3f4f6,#e9ebef)"></div>
<svg style="position:absolute;left:3346px;top:838px" width="24" height="24" viewBox="0 0 24 24" fill="none" stroke="#64748b" stroke-width="2.400"><rect x="1.500" y="1.500" width="8" height="8" rx="2"/><rect x="14.500" y="1.500" width="8" height="8" rx="2"/><rect x="1.500" y="14.500" width="8" height="8" rx="2"/><rect x="14.500" y="14.500" width="8" height="8" rx="2"/></svg>
<div class="t" style="left:3390px;top:830px;font-size:28px;letter-spacing:.6px;color:#64748b">Cards</div>
<div style="position:absolute;left:3526px;top:810px;width:240px;height:80px;border-radius:28px;background:linear-gradient(135deg,#f97316,#f85005);box-shadow:0 10px 30px rgba(0,0,0,.12)"></div>
<svg style="position:absolute;left:3598px;top:839px" width="28" height="22" viewBox="0 0 28 22" fill="none" stroke="#fff" stroke-width="3"><path d="M0 2h28M0 11h28M0 20h28"/></svg>
<div class="t m" style="left:3645px;top:830px;font-size:28px;letter-spacing:.6px;color:#fff">List</div>

<!-- Table -->
<div style="position:absolute;left:640px;top:950px;width:3136px;height:4127px;background:#fff;border:2px solid #cbd5e1;border-radius:24px"></div>
<div style="position:absolute;left:642px;top:952px;width:3132px;height:74px;background:#f3f4f6;border-bottom:2px solid #cbd5e1;border-radius:22px 22px 0 0"></div>
<div class="th" style="left:674px">TYPE</div><div class="th" style="left:924px">ACTIVITY</div><div class="th" style="left:1654px">LEAD</div><div class="th" style="left:2374px">AI / QUESTIONNAIRE</div><div class="th" style="left:2894px">DETAILS</div><div class="th" style="left:3388px">DATE &amp; TIME</div>

<div class="r" style="top:1026px"><i class="ic s"><svg><use href="#plane"/></svg></i><span class="a">Sent message to lead</span><span class="b g">Message Sent</span><i class="av">KN</i><span class="n">Kvetechz Napoles</span><span class="d">-</span><span class="p">Platform: facebook</span><span class="dt">Mar 19, 2026</span><span class="tm">10:43 AM</span><span class="ag">6 days ago</span></div>
<div class="r" style="top:1188px"><i class="ic v"><svg><use href="#env"/></svg></i><span class="a">Received message from lead</span><span class="b u">Message Received</span><i class="av">AS</i><span class="n">Aubrey Sy</span><span class="d">-</span><span class="p">Platform: facebook</span><span class="dt">Mar 19, 2026</span><span class="tm">10:43 AM</span><span class="ag">6 days ago</span></div>
<div class="r" style="top:1350px"><i class="ic s"><svg><use href="#plane"/></svg></i><span class="a">Sent message to lead</span><span class="b g">Message Sent</span><i class="av">KN</i><span class="n">Kvetechz Napoles</span><span class="d">-</span><span class="p">Platform: facebook</span><span class="dt">Mar 19, 2026</span><span class="tm">10:43 AM</span><span class="ag">6 days ago</span></div>
<div class="r" style="top:1512px"><i class="ic v"><svg><use href="#env"/></svg></i><span class="a">Received message from lead</span><span class="b u">Message Received</span><i class="av">KN</i><span class="n">Kvetechz Napoles</span><span class="d">-</span><span class="p">Platform: facebook</span><span class="dt">Mar 19, 2026</span><span class="tm">10:43 AM</span><span class="ag">6 days ago</span></div>
<div class="r" style="top:1674px"><i class="ic v"><svg><use href="#env"/></svg></i><span class="a">Received message from lead</span><span class="b u">Message Received</span><i class="av">B</i><span class="n">BD</span><span class="d">-</span><span class="p">Platform: facebook</span><span class="dt">Mar 19, 2026</span><span class="tm">10:43 AM</span><span class="ag">6 days ago</span></div>
<div class="r" style="top:1836px"><i class="ic v"><svg><use href="#env"/></svg></i><span class="a">Received message from lead</span><span class="b u">Message Received</span><i class="av">AS</i><span class="n">Aubrey Sy</span><span class="d">-</span><span class="p">Platform: facebook</span><span class="dt">Mar 19, 2026</span><span class="tm">10:43 AM</span><span class="ag">6 days ago</span></div>
<div class="r" style="top:1998px"><i class="ic s"><svg><use href="#plane"/></svg></i><span class="a">Sent message to lead</span><span class="b g">Message Sent</span><i class="av">M</i><span class="n">Marc</span><span class="d">-</span><span class="p">Platform: facebook</span><span class="dt">Mar 19, 2026</span><span class="tm">10:43 AM</span><span class="ag">6 days ago</span></div>
<div class="r" style="top:2160px"><i class="ic v"><svg><use href="#env"/></svg></i><span class="a">Received message from lead</span><span class="b u">Message Received</span><i class="av">VD</i><span class="n">Victoria Dalayday Lo</span><span class="d">-</span><span class="p">Platform: facebook</span><span class="dt">Mar 19, 2026</span><span class="tm">10:43 AM</span><span class="ag">6 days ago</span></div>
<div class="r" style="top:2322px"><i class="ic v"><svg><use href="#env"/></svg></i><span class="a">Received message from lead</span><span class="b u">Message Received</span><i class="av">KN</i><span class="n">Kvetechz Napoles</span><span class="d">-</span><span class="p">Platform: facebook</span><span class="dt">Mar 19, 2026</span><span class="tm">10:43 AM</span><span class="ag">6 days ago</span></div>
<div class="r" style="top:2484px"><i class="ic s"><svg><use href="#plane"/></svg></i><span class="a">Sent message to lead</span><span class="b g">Message Sent</span><i class="av">KN</i><span class="n">Kvetechz Napoles</span><span class="d">-</span><span class="p">Platform: facebook</span><span class="dt">Mar 19, 2026</span><span class="tm">10:43 AM</span><span class="ag">6 days ago</span></div>
<div class="r" style="top:2646px"><i class="ic s"><svg><use href="#plane"/></svg></i><span class="a">Sent message to lead</span><span class="b g">Message Sent</span><i class="av">B</i><span class="n">BD</span><span class="d">-</span><span class="p">Platform: facebook</span><span class="dt">Mar 19, 2026</span><span class="tm">10:43 AM</span><span class="ag">6 days ago</span></div>
<div class="r" style="top:2808px"><i class="ic s"><svg><use href="#plane"/></svg></i><span class="a">Sent message to lead</span><span class="b g">Message Sent</span><i class="av">B</i><span class="n">BD</span><span class="d">-</span><span class="p">Platform: facebook</span><span class="dt">Mar 19, 2026</span><span class="tm">10:43 AM</span><span class="ag">6 days ago</span></div>
<div class="r" style="top:2970px"><i class="ic v"><svg><use href="#env"/></svg></i><span class="a">Received message from lead</span><span class="b u">Message Received</span><i class="av">AS</i><span class="n">Aubrey Sy</span><span class="d">-</span><span class="p">Platform: facebook</span><span class="dt">Mar 19, 2026</span><span class="tm">10:43 AM</span><span class="ag">6 days ago</span></div>
<div class="r" style="top:3132px"><i class="ic s"><svg><use href="#plane"/></svg></i><span class="a">Sent message to lead</span><span class="b g">Message Sent</span><i class="av">AS</i><span class="n">Aubrey Sy</span><span class="d">-</span><span class="p">Platform: facebook</span><span class="dt">Mar 19, 2026</span><span class="tm">10:43 AM</span><span class="ag">6 days ago</span></div>
<div class="r" style="top:3294px"><i class="ic s"><svg><use href="#plane"/></svg></i><span class="a">Sent message to lead</span><span class="b g">Message Sent</span><i class="av">M</i><span class="n">Marc</span><span class="d">-</span><span class="p">Platform: facebook</span><span class="dt">Mar 19, 2026</span><span class="tm">10:43 AM</span><span class="ag">6 days ago</span></div>
<div class="r" style="top:3456px"><i class="ic v"><svg><use href="#env"/></svg></i><span class="a">Received message from lead</span><span class="b u">Message Received</span><i class="av">M</i><span class="n">Marc</span><span class="d">-</span><span class="p">Platform: facebook</span><span class="dt">Mar 19, 2026</span><span class="tm">10:43 AM</span><span class="ag">6 days ago</span></div>
<div class="r" style="top:3618px"><i class="ic v"><svg><use href="#env"/></svg></i><span class="a">Received message from lead</span><span class="b u">Message Received</span><i class="av">M</i><span class="n">Marc</span><span class="d">-</span><span class="p">Platform: facebook</span><span class="dt">Mar 19, 2026</span><span class="tm">10:43 AM</span><span class="ag">6 days ago</span></div>
<div class="r" style="top:3780px"><i class="ic s"><svg><use href="#plane"/></svg></i><span class="a">Sent message to lead</span><span class="b g">Message Sent</span><i class="av">VD</i><span class="n">Victoria Dalayday Lo</span><span class="d">-</span><span class="p">Platform: facebook</span><span class="dt">Mar 19, 2026</span><span class="tm">10:43 AM</span><span class="ag">6 days ago</span></div>
<div class="r" style="top:3942px"><i class="ic v"><svg><use href="#env"/></svg></i><span class="a">Received message from lead</span><span class="b u">Message Received</span><i class="av">KN</i><span class="n">Kvetechz Napoles</span><span class="d">-</span><span class="p">Platform: facebook</span><span class="dt">Mar 19, 2026</span><span class="tm">10:43 AM</span><span class="ag">6 days ago</span></div>
<div class="r" style="top:4104px"><i class="ic s"><svg><use href="#plane"/></svg></i><span class="a">Sent message to lead</span><span class="b g">Message Sent</span><i class="av">KN</i><span class="n">Kvetechz Napoles</span><span class="d">-</span><span class="p">Platform: facebook</span><span class="dt">Mar 19, 2026</span><span class="tm">10:43 AM</span><span class="ag">6 days ago</span></div>
<div class="r" style="top:4266px"><i class="ic s"><svg><use href="#plane"/></svg></i><span class="a">Sent message to lead</span><span class="b g">Message Sent</span><i class="av">KN</i><span class="n">Kvetechz Napoles</span><span class="d">-</span><span class="p">Platform: facebook</span><span class="dt">Mar 19, 2026</span><span class="tm">10:43 AM</span><span class="ag">6 days ago</span></div>
<div class="r" style="top:4428px"><i class="ic v"><svg><use href="#env"/></svg></i><span class="a">Received message from lead</span><span class="b u">Message Received</span><i class="av">KN</i><span class="n">Kvetechz Napoles</span><span class="d">-</span><span class="p">Platform: facebook</span><span class="dt">Mar 19, 2026</span><span class="tm">10:43 AM</span><span class="ag">6 days ago</span></div>
<div class="r" style="top:4590px"><i class="ic s"><svg><use href="#plane"/></svg></i><span class="a">Sent message to lead</span><span class="b g">Message Sent</span><i class="av">B</i><span class="n">BD</span><span class="d">-</span><span class="p">Platform: facebook</span><span class="dt">Mar 19, 2026</span><span class="tm">10:43 AM</span><span class="ag">6 days ago</span></div>
<div class="r" style="top:4752px"><i class="ic v"><svg><use href="#env"/></svg></i><span class="a">Received message from lead</span><span class="b u">Message Received</span><i class="av">B</i><span class="n">BD</span><span class="d">-</span><span class="p">Platform: facebook</span><span class="dt">Mar 19, 2026</span><span class="tm">10:43 AM</span><span class="ag">6 days ago</span></div>
<div class="r" style="top:4914px"><i class="ic s"><svg><use href="#plane"/></svg></i><span class="a">Sent message to lead</span><span class="b g">Message Sent</span><i class="av">AS</i><span class="n">Aubrey Sy</span><span class="d">-</span><span class="p">Platform: facebook</span><span class="dt">Mar 19, 2026</span><span class="tm">10:43 AM</span><span class="ag">6 days ago</span></div>

<!-- Pagination -->
<div class="t" style="left:640px;top:5160px;font-size:28px;letter-spacing:.77px;color:#4b5563">Showing 1 to 25 of 16342 activities</div>
<div class="pg" style="left:2206px;background:#f3f4f6;border-color:#e2e8f0"><svg style="position:absolute;left:28px;top:28px" width="14" height="24" viewBox="0 0 14 24" fill="none" stroke="#94a3b8" stroke-width="3"><path d="M11 2L3 12l8 10"/></svg></div>
<div class="pg" style="left:2298px;background:#f97316;border-color:#f97316;color:#fff;box-shadow:0 0 40px rgba(249,115,22,.35)">1</div>
<div class="pg" style="left:2390px">2</div><div class="pg" style="left:2482px">3</div><div class="pg" style="left:2574px">4</div><div class="pg" style="left:2666px">5</div><div class="pg" style="left:2758px">6</div><div class="pg" style="left:2850px">7</div><div class="pg" style="left:2942px">8</div><div class="pg" style="left:3034px">9</div><div class="pg" style="left:3126px;width:80px">10</div>
<div class="t" style="left:3238px;top:5160px;font-size:24px;color:#64748b">...</div>
<div class="pg" style="left:3281px;width:102px">653</div><div class="pg" style="left:3398px;width:101px">654</div>
<div class="pg" style="left:3513px;width:79px"><svg style="position:absolute;left:31px;top:28px" width="14" height="24" viewBox="0 0 14 24" fill="none" stroke="#475569" stroke-width="3"><path d="M3 2l8 10L3 22"/></svg></div>
<div class="t" style="left:3624px;top:5159px;font-size:24px;letter-spacing:.3px;color:#64748b">1-25 of 16342</div>

<!-- Cookie modal -->
<div class="x" style="left:3025px;top:1353px;width:766px;height:757px;background:rgba(255,255,255,.85);border:2px solid #e5e7eb;border-radius:32px;box-shadow:0 10px 30px rgba(0,0,0,.12)">
<svg style="left:48px;top:55px;fill:#f97316" width="40" height="40"><use href="#cookie"/></svg>
<div style="left:112px;top:53px;font-size:36px;font-weight:700;letter-spacing:.5px;color:#f97316;white-space:nowrap;line-height:44px">Cookie Preferences</div>
<svg style="left:693px;top:61px" width="24" height="24" viewBox="0 0 24 24" fill="none" stroke="#475569" stroke-width="4"><path d="M2 2l20 20M22 2L2 22"/></svg>
<div style="left:48px;top:135px;font-size:28px;line-height:40px;letter-spacing:1px;color:#4b5563;white-space:nowrap">We use cookies to enhance your MarketDragon<br>experience with AI-powered features, social<br>integrations, and personalized marketing tools.</div>
<svg style="left:48px;top:291px;fill:#10b981" width="32" height="34"><use href="#shield"/></svg>
<div class="cr" style="left:104px;top:287px">Essential</div>
<div style="left:534px;top:287px;font-size:24px;line-height:40px;color:#64748b;white-space:nowrap">Required</div>
<div class="tg" style="top:291px;background:#10b981"><span style="left:33px;top:4px;width:24px;height:24px;border-radius:50%;background:#fff"></span></div>
<svg style="left:48px;top:355px;fill:#2563eb" width="32" height="32"><use href="#chart"/></svg>
<div class="cr" style="left:104px;top:351px">Analytics</div>
<div class="tg" style="top:355px"></div>
<svg style="left:48px;top:419px;fill:#f59e0b" width="32" height="32"><use href="#horn"/></svg>
<div class="cr" style="left:104px;top:415px">Marketing</div>
<div class="tg" style="top:419px"></div>
<svg style="left:48px;top:483px;fill:#2563eb" width="32" height="32"><use href="#fb"/></svg>
<div class="cr" style="left:104px;top:479px">Social Media</div>
<div class="tg" style="top:483px"></div>
<svg style="left:48px;top:545px;fill:#f97316" width="40" height="32"><use href="#robot"/></svg>
<div class="cr" style="left:112px;top:543px">AI Features</div>
<div class="tg" style="top:547px"></div>
<div style="left:47px;top:615px;width:516px;height:92px;border-radius:20px;background:#2563eb;color:#fff;font-size:28px;line-height:92px;text-align:center;-webkit-text-stroke:.25px currentColor">Save Preferences</div>
<svg style="left:637px;top:647px;fill:#475569" width="28" height="28"><use href="#gear"/></svg>
</div>
</div></div></body></html>
